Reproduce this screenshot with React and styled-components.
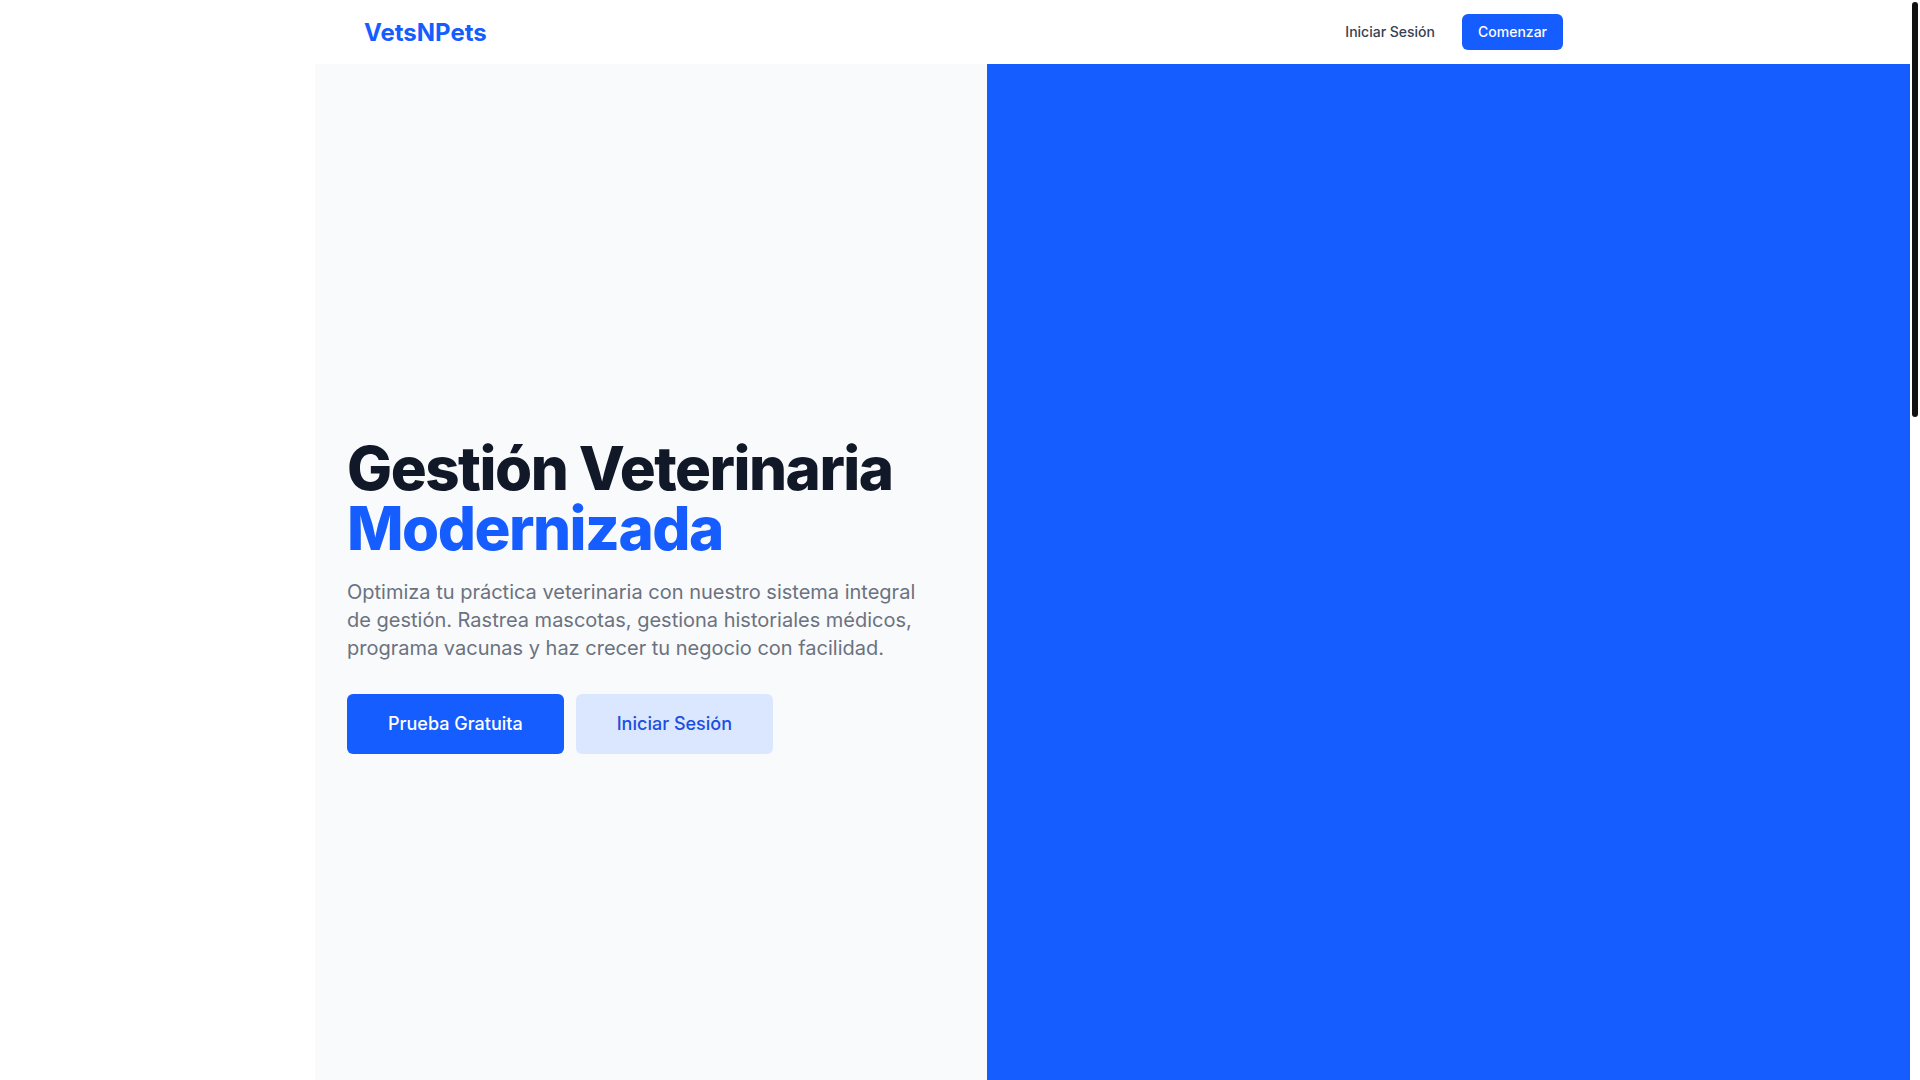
import React from "react";
import styled, { createGlobalStyle } from "styled-components";

const Global = createGlobalStyle`
  html, body { margin: 0; padding: 0; background: #ffffff; overflow: hidden; }
  body { font-family: Inter, "Noto Sans", "Liberation Sans", sans-serif; -webkit-font-smoothing: antialiased; }
  * { box-sizing: border-box; }
`;

const Shell = styled.div`
  display: flex;
  height: 100vh;
  overflow: hidden;
`;

const Page = styled.div`
  flex: 1;
  min-width: 0;
  min-height: 2784px;
  display: flex;
  flex-direction: column;
`;

const ScrollTrack = styled.div`
  flex: 0 0 10px;
  height: 100vh;
  background: #ffffff;
  padding: 2px;
`;

const ScrollThumb = styled.div`
  height: 415px;
  border-radius: 3px;
  background: #111111;
`;

const Header = styled.header`
  height: 64px;
  max-width: 1280px;
  width: 100%;
  margin: 0 auto;
  padding: 0 32px;
  display: flex;
  align-items: center;
  justify-content: space-between;
`;

const Logo = styled.a`
  padding-left: 17px;
  font-size: 24px;
  font-weight: 700;
  color: #165dff;
  text-decoration: none;
`;

const Nav = styled.nav`
  display: flex;
  align-items: center;
  gap: 27px;
`;

const NavLink = styled.a`
  font-size: 14px;
  line-height: 20px;
  font-weight: 500;
  color: #374151;
  text-decoration: none;
`;

const SmallButton = styled.a`
  display: inline-flex;
  align-items: center;
  padding: 8px 16px;
  border-radius: 6px;
  background: #165dff;
  color: #ffffff;
  font-size: 14px;
  line-height: 20px;
  font-weight: 500;
  text-decoration: none;
`;

const Hero = styled.section`
  display: flex;
  min-height: 1063px;
`;

const Gutter = styled.div`
  flex: 0 0 calc((100% - 1280px) / 2);
  background: #ffffff;
`;

const TextPanel = styled.div`
  flex: 0 0 672px;
  background: #f9fafb;
  padding: 0 64px 0 32px;
  display: flex;
  flex-direction: column;
  justify-content: center;
`;

const ImagePanel = styled.div`
  flex: 1;
  background: #165dff;
`;

const Title = styled.h1`
  margin: 0;
  font-size: 60px;
  line-height: 1;
  font-weight: 800;
  letter-spacing: -0.025em;
  color: #111827;
`;

const Accent = styled.span`
  display: block;
  color: #165dff;
`;

const Lead = styled.p`
  margin: 20px 0 0;
  font-size: 20px;
  line-height: 28px;
  color: #6b7280;
  max-width: 576px;
`;

const Actions = styled.div`
  margin-top: 32px;
  display: flex;
  gap: 12px;
`;

const BigButton = styled.a`
  display: inline-flex;
  align-items: center;
  justify-content: center;
  padding: 16px 41px;
  border-radius: 6px;
  font-size: 18px;
  line-height: 28px;
  font-weight: 500;
  text-decoration: none;
  background: ${(p) => (p.$variant === "light" ? "#dae7fe" : "#165dff")};
  color: ${(p) => (p.$variant === "light" ? "#1a4fe0" : "#ffffff")};
`;

const BelowFold = styled.section`
  flex: 1;
  background: #ffffff;
`;

export default function App() {
  return (
    <>
      <Global />
      <Shell>
        <Page>
          <Header>
            <Logo href="#">VetsNPets</Logo>
            <Nav>
              <NavLink href="#">Iniciar Sesión</NavLink>
              <SmallButton href="#">Comenzar</SmallButton>
            </Nav>
          </Header>
          <Hero>
            <Gutter />
            <TextPanel>
              <Title>
                Gestión Veterinaria
                <Accent>Modernizada</Accent>
              </Title>
              <Lead>
                Optimiza tu práctica veterinaria con nuestro sistema integral de
                gestión. Rastrea mascotas, gestiona historiales médicos, programa
                vacunas y haz crecer tu negocio con facilidad.
              </Lead>
              <Actions>
                <BigButton href="#">Prueba Gratuita</BigButton>
                <BigButton href="#" $variant="light">Iniciar Sesión</BigButton>
              </Actions>
            </TextPanel>
            <ImagePanel />
          </Hero>
          <BelowFold />
        </Page>
        <ScrollTrack>
          <ScrollThumb />
        </ScrollTrack>
      </Shell>
    </>
  );
}
